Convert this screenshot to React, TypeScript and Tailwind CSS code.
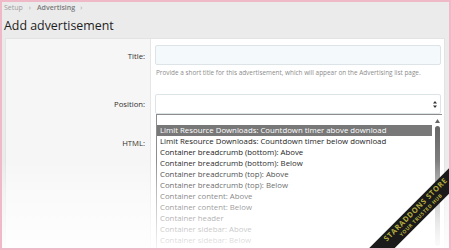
import React from "react";

const items = [
  "Limit Resource Downloads: Countdown timer above download",
  "Limit Resource Downloads: Countdown timer below download",
  "Container breadcrumb (bottom): Above",
  "Container breadcrumb (bottom): Below",
  "Container breadcrumb (top): Above",
  "Container breadcrumb (top): Below",
  "Container content: Above",
  "Container content: Below",
  "Container header",
  "Container sidebar: Above",
  "Container sidebar: Below",
];

export default function App() {
  return (
    <div
      className="relative w-[451px] h-[250px] overflow-hidden bg-[#ebebeb] border-[2px] border-[#efb9c7] text-[#222]"
      style={{ fontFamily: '"Open Sans", "Noto Sans", sans-serif' }}
    >
      <div className="flex items-center pl-[2px] pt-[1px] h-[11px] text-[7px] leading-[10px] text-[#9c9c9c]">
        <span>Setup</span>
        <span className="ml-[6px] mr-[6px] text-[7px]">›</span>
        <span className="font-semibold text-[#7a7a7a]">Advertising</span>
        <span className="ml-[5px] text-[7px]">›</span>
      </div>
      <div className="pl-[2px] pt-[5px] h-[25px] text-[12.4px] leading-[16px] text-[#1e1e1e]">
        Add advertisement
      </div>
      <div className="ml-[3px] mr-[4px] flex h-[220px] border border-[#e3e3e3] bg-white">
        <div className="w-[145px] shrink-0 bg-[#f6f6f6] border-r border-[#e6e6e6] text-[7.7px] leading-[12px] text-[#303030] text-right pr-[5px]">
          <div className="mt-[11px] h-[12px]">Title:</div>
          <div className="mt-[36px] h-[12px]">Position:</div>
          <div className="mt-[27px] h-[12px]">HTML:</div>
        </div>
        <div className="flex-1 min-w-0 pl-[4px] pr-[3px] pt-[6px]">
          <div className="h-[20px] rounded-[2px] border border-[#dde4e8] bg-[#f4f9fb]" />
          <div className="mt-[2px] h-[12px] pl-[1px] text-[6.4px] leading-[12px] text-[#8c8c8c] whitespace-nowrap">
            Provide a short title for this advertisement, which will appear on the Advertising list page.
          </div>
          <div className="mt-[15px] h-[20px] rounded-[2px] border border-[#dde4e8] bg-white flex items-center justify-end pr-[3px]">
            <svg width="4" height="7" viewBox="0 0 4 7">
              <path d="M2 0 L4 2.6 L0 2.6 Z M2 7 L4 4.4 L0 4.4 Z" fill="#333" />
            </svg>
          </div>
          <div className="ml-[1px] mr-[-1px] flex h-[140px] border-l border-t border-[#8d8d8d] bg-white">
            <div className="flex-1 min-w-0 pt-[10px] text-[7.8px] leading-[11px] text-[#1c1c1c]">
              {items.map((t, i) => (
                <div
                  key={t}
                  className={
                    "pl-[3px] h-[11px] whitespace-nowrap " +
                    (i === 0 ? "bg-[#787878] text-white" : "")
                  }
                >
                  {t}
                </div>
              ))}
            </div>
            <div className="w-[10px] shrink-0 flex flex-col items-center pt-[4px] bg-white">
              <svg width="5" height="4" viewBox="0 0 5 4">
                <path d="M2.5 0 L5 4 L0 4 Z" fill="#666" />
              </svg>
              <div className="mt-[3px] w-[5px] h-[120px] rounded-full bg-gradient-to-b from-[#666666] via-[#8f8f8f] to-[#d6d6d6]" />
            </div>
          </div>
        </div>
      </div>
      <div className="pointer-events-none absolute left-0 right-0 bottom-0 h-[88px] bg-[linear-gradient(to_bottom,rgba(255,255,255,0)_0%,rgba(255,255,255,0.4)_35%,rgba(255,255,255,0.9)_100%)]" />
      <div className="pointer-events-none absolute right-[-44px] bottom-[27px] w-[150px] h-[18px] -rotate-45 bg-[#1a1a1a] flex flex-col items-center justify-center leading-none">
        <span className="text-[7.5px] font-bold tracking-[0.6px] text-[#b3ab3e]">STARADDONS STORE</span>
        <span className="text-[5px] font-bold tracking-[0.5px] text-[#b3ab3e] mt-[1px]">YOUR TRUSTED HUB</span>
      </div>
    </div>
  );
}
